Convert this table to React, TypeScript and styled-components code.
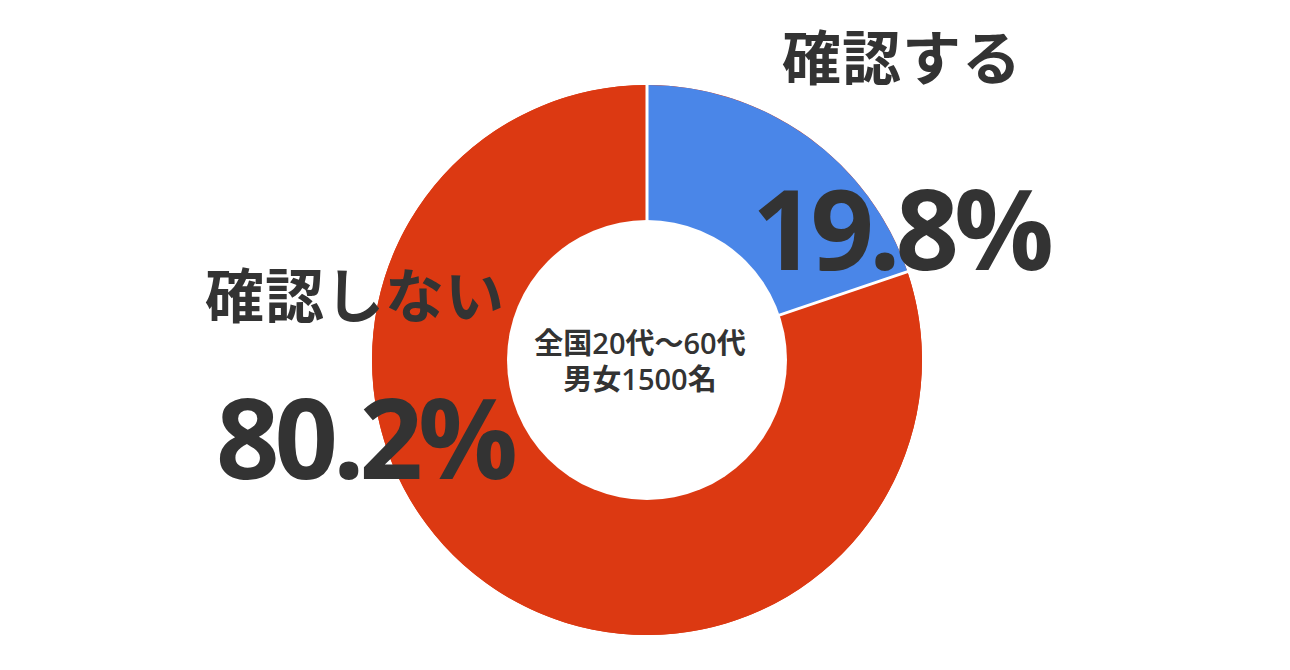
import styled, { createGlobalStyle } from "styled-components";

const GlobalStyle = createGlobalStyle`
  html, body {
    margin: 0;
    padding: 0;
    background: #ffffff;
  }
  body {
    font-family: "Open Sans", "Noto Sans CJK JP", sans-serif;
    color: #333333;
  }
`;

const BLUE = "#4a86e8";
const RED = "#dc3912";

const slices = [
  { label: "確認する", value: 19.8, color: BLUE },
  { label: "確認しない", value: 80.2, color: RED },
];

const SIZE = 560;
const C = SIZE / 2;
const OUTER = 275;
const INNER = 140;

const point = (deg: number, r: number) => {
  const a = (deg * Math.PI) / 180;
  return [C + r * Math.sin(a), C - r * Math.cos(a)];
};

const wedge = (from: number, to: number) => {
  const [x1, y1] = point(from, OUTER);
  const [x2, y2] = point(to, OUTER);
  const large = to - from > 180 ? 1 : 0;
  return `M ${C} ${C} L ${x1} ${y1} A ${OUTER} ${OUTER} 0 ${large} 1 ${x2} ${y2} Z`;
};

const Stage = styled.div`
  position: relative;
  width: 1290px;
  height: 670px;
  overflow: hidden;
  display: flex;
  justify-content: center;
  align-items: flex-start;
  padding: 80px 0 0 4px;
  box-sizing: border-box;
`;

const Chart = styled.svg`
  display: block;
  flex: none;
`;

// labels sit on top of the chart, so they are placed over it
const Label = styled.div<{ $x: number; $y: number; $gap: number; $shift: number }>`
  position: absolute;
  left: ${(p) => p.$x}px;
  top: ${(p) => p.$y}px;
  display: flex;
  flex-direction: column;
  align-items: flex-start;
  gap: ${(p) => p.$gap}px;

  & > :last-child {
    margin-left: ${(p) => p.$shift}px;
  }
`;

const Name = styled.div`
  font-family: "Noto Sans CJK JP", sans-serif;
  font-weight: 700;
  font-size: 59px;
  line-height: 1;
  letter-spacing: 1px;
  white-space: nowrap;
`;

const Percent = styled.div`
  font-family: "Open Sans", "Noto Sans CJK JP", sans-serif;
  font-weight: 700;
  font-size: 111px;
  line-height: 1;
  letter-spacing: -5px;
  white-space: nowrap;
`;

const Caption = styled.div`
  position: absolute;
  left: 0;
  right: 0;
  top: 325px;
  padding-right: 10px;
  text-align: center;
  font-family: "Open Sans", "Noto Sans CJK JP", sans-serif;
  font-weight: 600;
  font-size: 29px;
  line-height: 36px;
`;

export default function App() {
  let start = 0;
  const arcs = slices.map((s) => {
    const from = start;
    const to = start + (s.value / 100) * 360;
    start = to;
    return { ...s, from, to };
  });

  return (
    <>
      <GlobalStyle />
      <Stage>
        <Chart width={SIZE} height={SIZE} viewBox={`0 0 ${SIZE} ${SIZE}`}>
          <circle cx={C} cy={C} r={OUTER} fill={RED} />
          {arcs
            .filter((a) => a.to - a.from < 360)
            .map((a) => (
              <path key={a.label} d={wedge(a.from, a.to)} fill={a.color} />
            ))}
          {arcs.map((a) => {
            const [x, y] = point(a.from, OUTER + 1);
            return (
              <line
                key={`sep-${a.label}`}
                x1={C}
                y1={C}
                x2={x}
                y2={y}
                stroke="#ffffff"
                strokeWidth={3}
              />
            );
          })}
          <circle cx={C} cy={C} r={INNER} fill="#ffffff" />
        </Chart>

        <Label $x={782} $y={25} $gap={88} $shift={-30}>
          <Name>確認する</Name>
          <Percent>19.8%</Percent>
        </Label>

        <Label $x={205} $y={263} $gap={59} $shift={11}>
          <Name>確認しない</Name>
          <Percent>80.2%</Percent>
        </Label>

        <Caption>
          全国20代～60代
          <br />
          男女1500名
        </Caption>
      </Stage>
    </>
  );
}
